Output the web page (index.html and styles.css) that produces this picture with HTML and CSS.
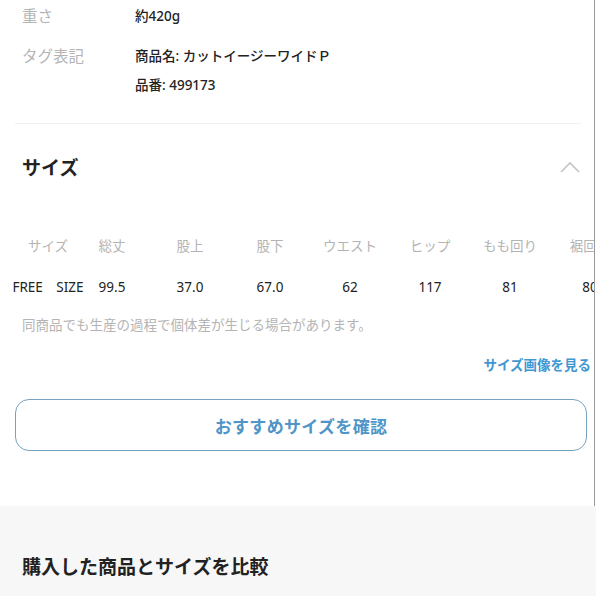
FILE: index.html
```html
<!DOCTYPE html>
<html lang="ja">
<head>
<meta charset="utf-8">
<title>サイズ</title>
<link rel="stylesheet" href="styles.css">
</head>
<body>
<div class="main">
  <div class="spec">
    <div class="spec-row">
      <div class="spec-label">重さ</div>
      <div class="spec-value"><div class="line">約420g</div></div>
    </div>
    <div class="spec-row">
      <div class="spec-label">タグ表記</div>
      <div class="spec-value">
        <div class="line">商品名: カットイージーワイドＰ</div>
        <div class="line">品番: 499173</div>
      </div>
    </div>
  </div>
  <div class="divider"></div>
  <div class="section-head">
    <h2 class="title">サイズ</h2>
    <svg class="chev" width="20" height="12" viewBox="0 0 20 12"><path d="M1 11 L10 2 L19 11" fill="none" stroke="#c4c4c4" stroke-width="1.6"/></svg>
  </div>
  <div class="size-table">
    <div class="cell head">サイズ</div>
    <div class="cell head">総丈</div>
    <div class="cell head">股上</div>
    <div class="cell head">股下</div>
    <div class="cell head">ウエスト</div>
    <div class="cell head">ヒップ</div>
    <div class="cell head">もも回り</div>
    <div class="cell head">裾回り</div>
    <div class="cell data">FREE　SIZE</div>
    <div class="cell data">99.5</div>
    <div class="cell data">37.0</div>
    <div class="cell data">67.0</div>
    <div class="cell data">62</div>
    <div class="cell data">117</div>
    <div class="cell data">81</div>
    <div class="cell data">80</div>
  </div>
  <p class="note">同商品でも生産の過程で個体差が生じる場合があります。</p>
  <div class="link-row"><a class="link">サイズ画像を見る</a></div>
  <div class="btn-wrap"><button class="btn">おすすめサイズを確認</button></div>
</div>
<div class="compare">
  <h2 class="title">購入した商品とサイズを比較</h2>
</div>
</body>
</html>
```
FILE: styles.css
```css
html, body {
  margin: 0;
  padding: 0;
  background: #ffffff;
  font-family: "Noto Sans", "Noto Sans CJK JP", sans-serif;
  color: #222222;
  overflow: hidden;
}
.main {
  width: 595px;
  box-sizing: border-box;
  border-right: 1px solid #9a9a9a;
  overflow: hidden;
  padding-bottom: 55px;
}
.spec {
  padding: 4px 0 0 22px;
  display: flex;
  flex-direction: column;
  gap: 16px;
}
.spec-row {
  display: grid;
  grid-template-columns: 113px 1fr;
}
.spec-label {
  font-size: 15.5px;
  line-height: 24px;
  color: #b4b4b4;
}
.spec-value {
  display: flex;
  flex-direction: column;
  gap: 5px;
}
.line {
  font-size: 13.5px;
  line-height: 24px;
  font-weight: 500;
  color: #222;
}
.divider {
  height: 1px;
  background: #efefef;
  margin: 26px 13px 0 15px;
}
.section-head {
  display: flex;
  justify-content: space-between;
  align-items: center;
  padding: 30px 14px 0 22px;
}
.title {
  margin: 0;
  font-size: 19px;
  line-height: 28px;
  font-weight: 700;
  color: #222;
}
.chev {
  display: block;
  margin-top: -2px;
}
.size-table {
  display: grid;
  grid-template-columns: 52px 76px repeat(6, 80px);
  row-gap: 17px;
  padding: 52px 0 0 22px;
  width: max-content;
}
.cell {
  display: flex;
  justify-content: center;
  white-space: nowrap;
  line-height: 24px;
  font-size: 13.5px;
}
.head {
  color: #b4b4b4;
}
.data {
  color: #222;
}
.note {
  margin: 15px 0 0 22px;
  font-size: 13.5px;
  line-height: 22px;
  color: #b4b4b4;
}
.link-row {
  display: flex;
  justify-content: flex-end;
  padding: 18px 3px 0 0;
}
.link {
  font-size: 13.5px;
  line-height: 22px;
  font-weight: 700;
  color: #3f97d2;
}
.btn-wrap {
  padding: 23px 7px 0 15px;
}
.btn {
  display: block;
  width: 100%;
  height: 52px;
  border: 1px solid #74a2c0;
  border-radius: 14px;
  background: #ffffff;
  font-family: "Noto Sans", "Noto Sans CJK JP", sans-serif;
  font-size: 17px;
  font-weight: 700;
  letter-spacing: 0.3px;
  color: #4f95c7;
  padding: 0;
}
.compare {
  background: #f7f7f7;
  padding: 47px 22px 60px;
}
```
